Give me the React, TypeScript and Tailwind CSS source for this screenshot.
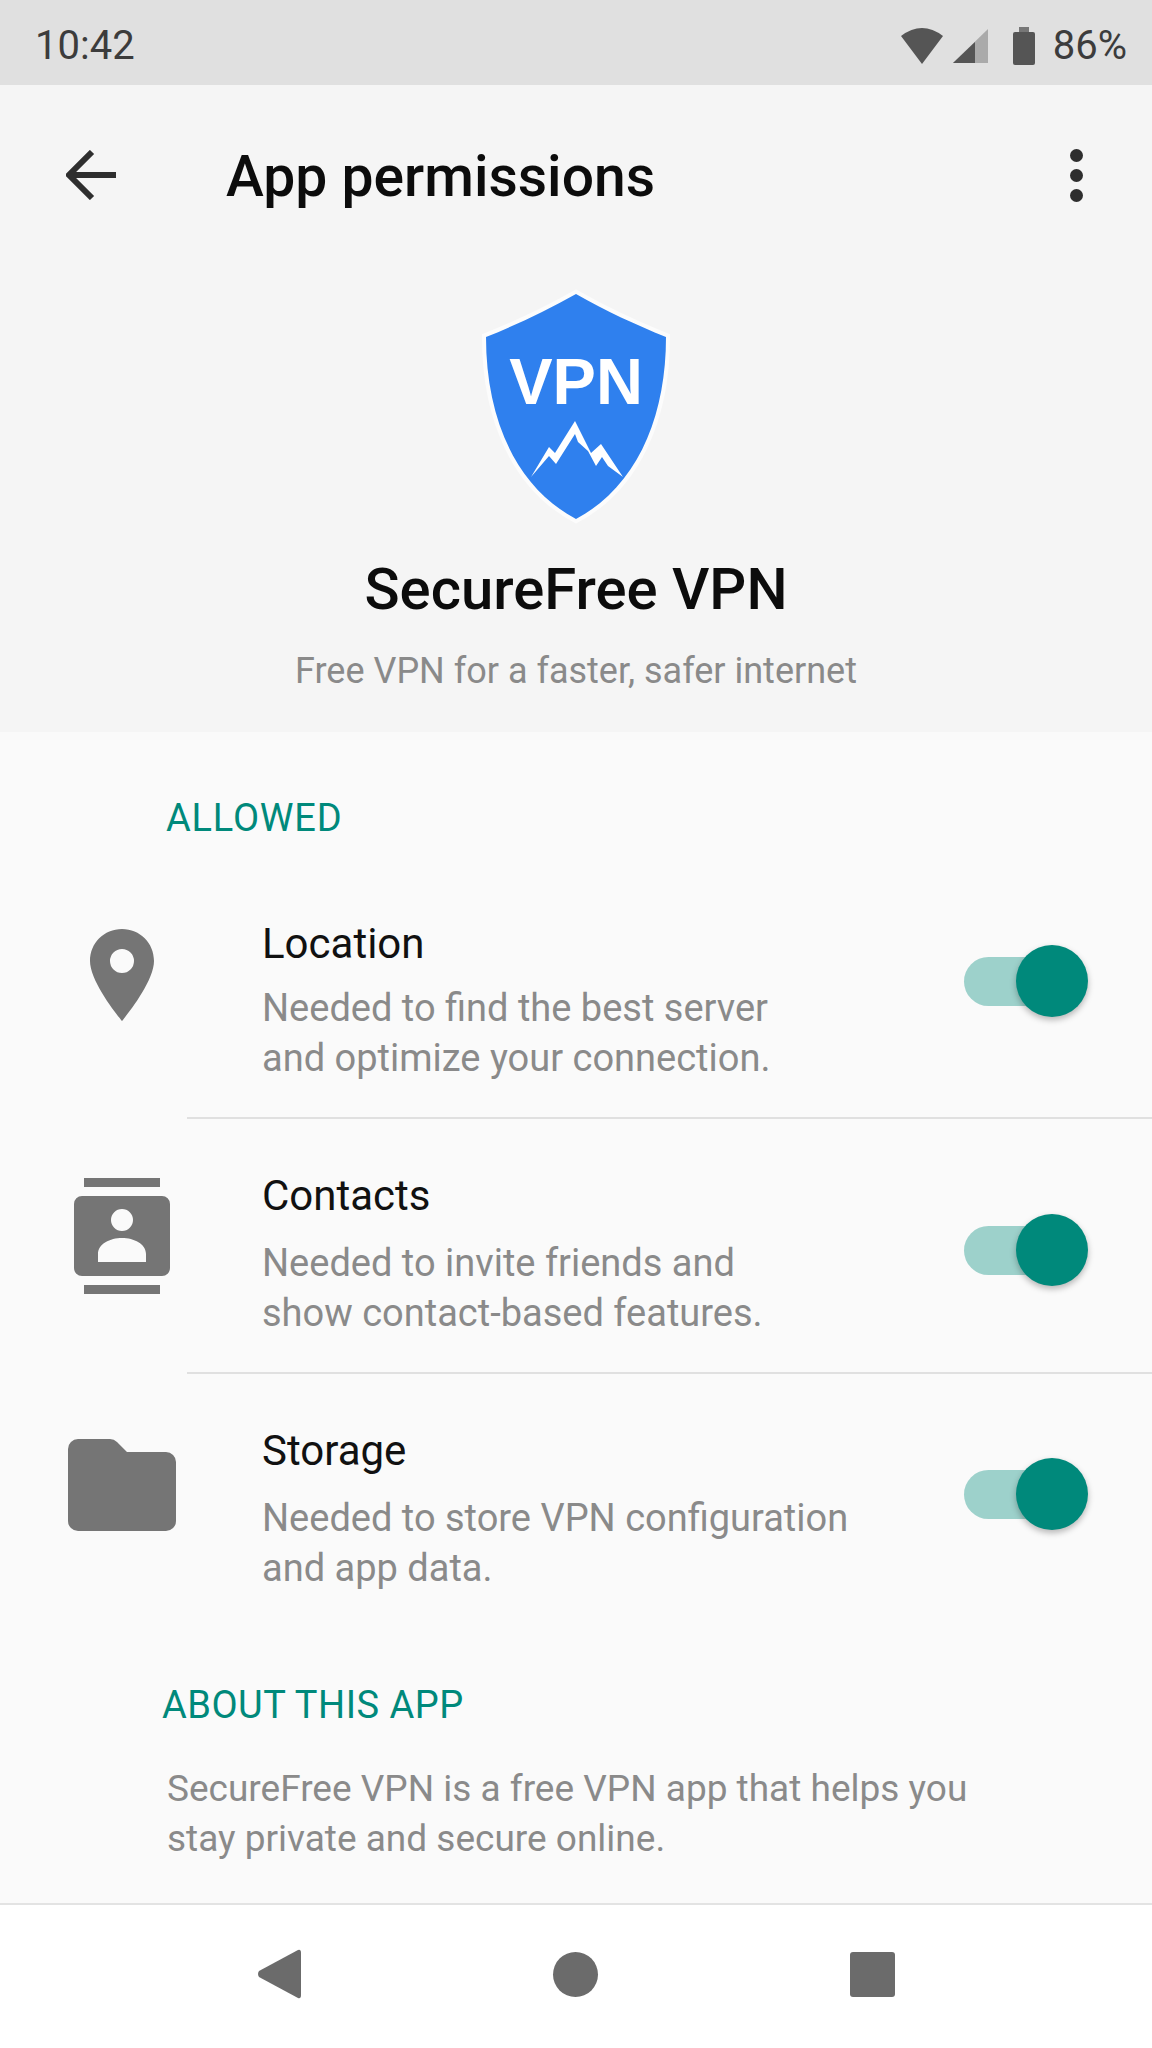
import type { ReactNode } from "react";

const font = { fontFamily: "Roboto, sans-serif" };

function Toggle() {
  return (
    <div className="relative h-[72px] w-[124px] shrink-0">
      <div className="absolute left-0 top-[12px] h-[49px] w-[100px] rounded-full bg-[#9dd1cb]" />
      <div className="absolute left-[52px] top-0 h-[72px] w-[72px] rounded-full bg-[#00897b] shadow-[0_3px_6px_rgba(0,0,0,0.28)]" />
    </div>
  );
}

function PermissionRow({
  icon,
  title,
  lines,
  iconTop,
  toggleTop,
  textTop = "pt-[52px]",
  descGap = "mt-[17px]",
}: {
  icon: ReactNode;
  title: string;
  lines: string[];
  iconTop: string;
  toggleTop: string;
  textTop?: string;
  descGap?: string;
}) {
  return (
    <div className="flex h-[253px] items-start">
      <div className={`flex w-[262px] shrink-0 justify-center pr-[18px] ${iconTop}`}>{icon}</div>
      <div className={`flex-1 ${textTop}`}>
        <div className="text-[42px] leading-[50px] text-[#111]">{title}</div>
        <div className={`${descGap} text-[38px] leading-[50px] text-[#8a8a8a]`}>
          {lines.map((l) => (
            <div key={l}>{l}</div>
          ))}
        </div>
      </div>
      <div className={`mr-[64px] ${toggleTop}`}>
        <Toggle />
      </div>
    </div>
  );
}

export default function App() {
  return (
    <div className="flex h-[2048px] w-[1152px] flex-col overflow-hidden bg-[#fafafa]" style={font}>
      {/* status bar */}
      <div className="flex h-[85px] shrink-0 items-center justify-between bg-[#e0e0e0] pl-[35px] pr-[25px] pt-[6px]">
        <span className="text-[40px] text-[#3c3c3c]">10:42</span>
        <div className="flex items-center">
          <svg width="42" height="36" viewBox="0 0 42 36" className="mr-[10px]">
            <path d="M21 36 L0 8 Q21 -8 42 8 Z" fill="#555" />
          </svg>
          <svg width="35" height="34" viewBox="0 0 35 34" className="mr-[24px]">
            <path d="M35 0 V34 H0 Z" fill="#aaa" />
            <path d="M22 13 V34 H0 Z" fill="#555" />
          </svg>
          <svg width="24" height="38" viewBox="0 0 24 38" className="mr-[17px]">
            <rect x="7" y="0" width="10" height="6" fill="#777" />
            <rect x="1" y="5" width="22" height="33" rx="2" fill="#555" />
          </svg>
          <span className="text-[40px] text-[#3c3c3c]">86%</span>
        </div>
      </div>

      {/* header */}
      <div className="flex h-[647px] shrink-0 flex-col items-center bg-[#f5f5f5]">
        <div className="flex h-[180px] w-full items-center pl-[66px] pr-[69px]">
          <svg width="50" height="50" viewBox="0 0 50 50" fill="none" stroke="#2e2e2e" strokeWidth="6">
            <path d="M50 25 H4" />
            <path d="M26 2 L3 25 L26 48" />
          </svg>
          <h1 className="ml-[110px] flex-1 pt-[3px] text-[57px] font-medium text-[#0c0c0c]">App permissions</h1>
          <div className="flex flex-col gap-[7px]">
            <div className="h-[13px] w-[13px] rounded-full bg-[#2e2e2e]" />
            <div className="h-[13px] w-[13px] rounded-full bg-[#2e2e2e]" />
            <div className="h-[13px] w-[13px] rounded-full bg-[#2e2e2e]" />
          </div>
        </div>
        <svg width="196" height="236" viewBox="57 20 196 236" className="mt-[24px]">
          <path
            d="M155 25 C185 42 215 56 245 68 C245 150 215 218 155 250 C95 218 65 150 65 68 C95 56 125 42 155 25 Z"
            fill="#2f80ee"
            stroke="#fcfcfc"
            strokeWidth="8"
            paintOrder="stroke"
          />
          <text x="155" y="135" textAnchor="middle" fontSize="65" fontWeight="700" fill="#fff" fontFamily="Liberation Sans, sans-serif">
            VPN
          </text>
          <path
            d="M110 208 L128 178 L134 184 L154 152 L170 184 L180 175 L202 208 L187 197 L181 188 L175 197 L167 182 L157 173 L154 165 L135 195 L128 187 Z"
            fill="#fff"
          />
        </svg>
        <div className="mt-[32px] text-[58px] font-medium leading-[64px] text-[#0c0c0c]">SecureFree VPN</div>
        <div className="mt-[25px] text-[36px] leading-[50px] text-[#8a8a8a]">Free VPN for a faster, safer internet</div>
      </div>

      {/* permissions */}
      <div className="flex-1">
        <div className="pl-[166px] pt-[62px] text-[38px] leading-[48px] tracking-[0.8px] text-[#00897b]">ALLOWED</div>
        <div className="mt-[22px]">
          <PermissionRow
            iconTop="pt-[65px]"
            toggleTop="pt-[81px]"
            textTop="pt-[55px]"
            descGap="mt-[14px]"
            title="Location"
            lines={["Needed to find the best server", "and optimize your connection."]}
            icon={
              <svg width="64" height="92" viewBox="0 0 64 92">
                <path
                  fillRule="evenodd"
                  d="M32 0 C14 0 0 14 0 32 C0 54 32 92 32 92 C32 92 64 54 64 32 C64 14 50 0 32 0 Z M32 20 A12 12 0 1 1 32 44 A12 12 0 1 1 32 20 Z"
                  fill="#757575"
                />
              </svg>
            }
          />
        </div>
        <div className="ml-[187px] h-[2px] bg-[#e0e0e0]" />
        <PermissionRow
          iconTop="pt-[59px]"
          toggleTop="pt-[95px]"
          title="Contacts"
          lines={["Needed to invite friends and", "show contact-based features."]}
          icon={
            <svg width="96" height="116" viewBox="0 0 96 116">
              <rect x="10" y="0" width="76" height="9" fill="#757575" />
              <rect x="10" y="107" width="76" height="9" fill="#757575" />
              <path
                fillRule="evenodd"
                d="M8 18 H88 A8 8 0 0 1 96 26 V90 A8 8 0 0 1 88 98 H8 A8 8 0 0 1 0 90 V26 A8 8 0 0 1 8 18 Z M48 31 A11 11 0 1 0 48 53 A11 11 0 1 0 48 31 Z M24 84 H72 V76 C72 66 60 60 48 60 C36 60 24 66 24 76 Z"
                fill="#757575"
              />
            </svg>
          }
        />
        <div className="ml-[187px] h-[2px] bg-[#e0e0e0]" />
        <PermissionRow
          iconTop="pt-[65px]"
          toggleTop="pt-[84px]"
          title="Storage"
          lines={["Needed to store VPN configuration", "and app data."]}
          icon={
            <svg width="108" height="92" viewBox="0 0 108 92">
              <path
                d="M10 0 H42 Q46 0 49 3 L59 13 H98 A10 10 0 0 1 108 23 V82 A10 10 0 0 1 98 92 H10 A10 10 0 0 1 0 82 V10 A10 10 0 0 1 10 0 Z"
                fill="#757575"
              />
            </svg>
          }
        />
        <div className="pl-[162px] pt-[54px] text-[38px] leading-[48px] tracking-[0.5px] text-[#00897b]">ABOUT THIS APP</div>
        <div className="pl-[167px] pt-[35px] text-[37px] leading-[50px] text-[#8a8a8a]">
          <div>SecureFree VPN is a free VPN app that helps you</div>
          <div>stay private and secure online.</div>
        </div>
      </div>

      {/* nav bar */}
      <div className="flex h-[145px] shrink-0 items-start justify-center border-t-2 border-[#e3e3e3] bg-white pt-[44px]">
        <div className="flex w-[638px] items-center justify-between">
          <svg width="44" height="50" viewBox="0 0 44 50">
            <path d="M41 1 Q44 0 44 4 V46 Q44 50 41 49 L2 28 Q0 25 2 22 Z" fill="#6b6b6b" />
          </svg>
          <div className="h-[45px] w-[45px] rounded-full bg-[#6b6b6b]" />
          <div className="h-[45px] w-[45px] rounded-[3px] bg-[#6b6b6b]" />
        </div>
      </div>
    </div>
  );
}
